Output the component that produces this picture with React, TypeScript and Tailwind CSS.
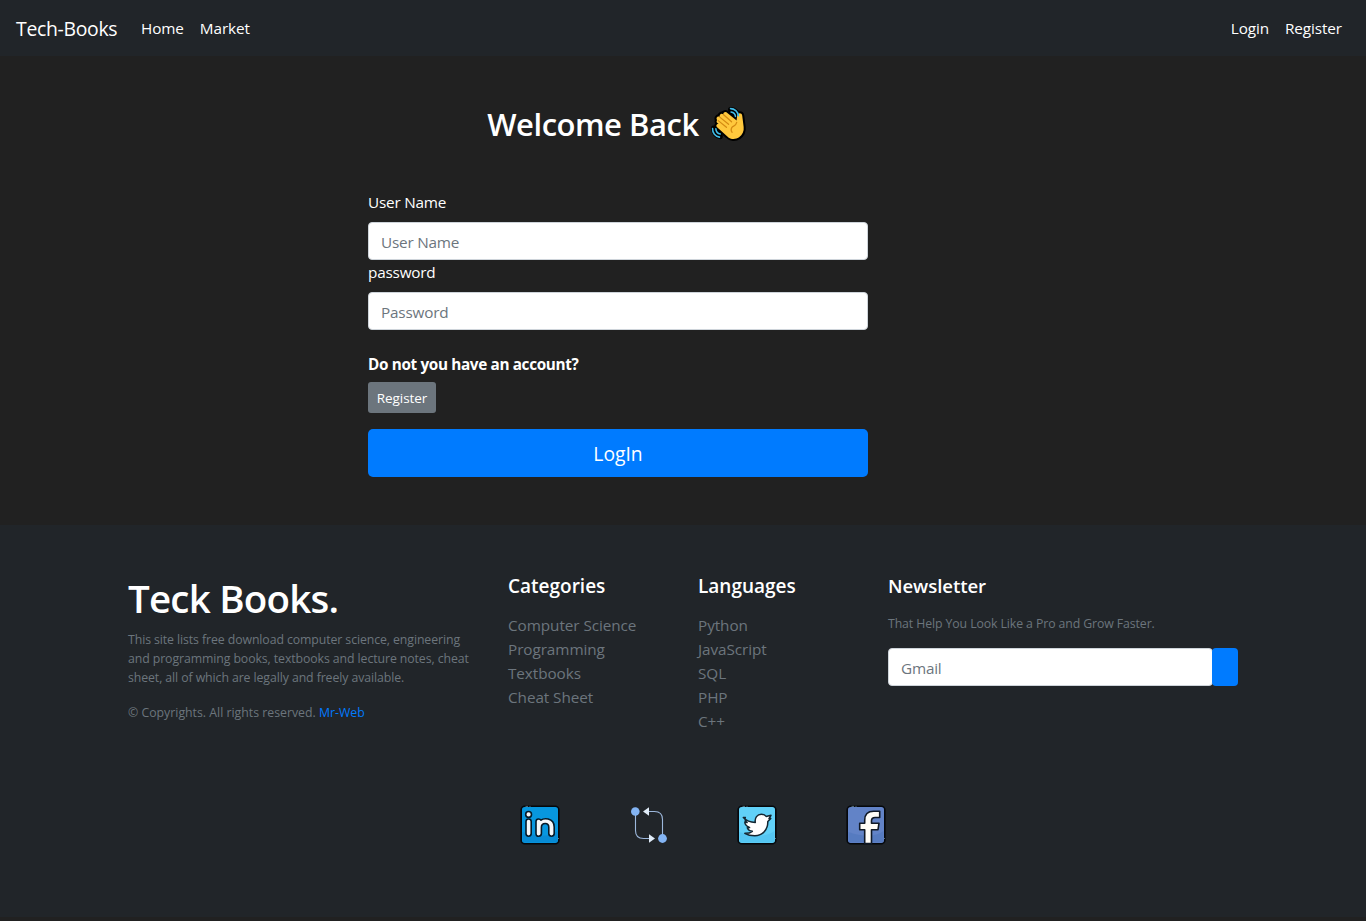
import type { ReactNode } from "react";

const categories = ["Computer Science", "Programming", "Textbooks", "Cheat Sheet"];
const languages = ["Python", "JavaScript", "SQL", "PHP", "C++"];

function WavingHand() {
  return (
    <svg className="h-10 w-10 shrink-0" viewBox="0.500 0 39 39" fill="none" strokeLinecap="round" strokeLinejoin="round">
      <g stroke="#000" strokeWidth="5">
        <path d="M21.5 5.500c4 0 6.700 2.500 7.200 6M23 9.200c1.500.2 2.700 1.200 3 2.600M5 23.500c-.2 4.500 2.500 7.700 6.500 8.300M7.700 24.700c.2 2 1.400 3.500 3 4" />
      </g>
      <path
        d="M8.400 15.500c-1.500-2 .7-4.200 2.600-2.900-.8-2.300 1.700-4.100 3.400-2.500.2-2.400 2.700-2.800 4-1.300l9 7.400.5-4.600c.5-3.200 4.500-3.400 5-.2l1.400 11.100c.5 4.200-1.200 7.700-4.500 10-3.700 2.500-8.300 2.200-11.400-.9L8.400 22.700c-1.700-1.700.1-4 2.100-2.800-2.500-1.700-3.300-2.700-2.100-4.400Z"
        fill="#ffc83d"
        stroke="#000"
        strokeWidth="4"
        className="[paint-order:stroke]"
      />
      <g stroke="#40bde9" strokeWidth="1.500">
        <path d="M21.500 4.500c4 0 7.200 3 7.700 7M22 7.800c2.500.3 4 2 4.300 4.300M4 23.800c-.3 4.500 2.700 7.900 6.700 8.500M7.200 24.200c.2 2.800 1.800 4.600 4.300 5" />
      </g>
      <path d="m11 12.800 8.600 7M14.500 10.300l8 7M9.500 16.200l8 6.500M27.500 18c-.8 4-3.600 3-4.800 5-1 1.700-.6 3.500.3 4.700" stroke="#d48a12" strokeWidth="1.200" />
    </svg>
  );
}

function BadgeFrame({ fill, edge, children }: { fill: string; edge: string; children: ReactNode }) {
  return (
    <svg className="h-10 w-10" viewBox="0 0 40 40">
      <rect x="1.200" y="1.200" width="37.600" height="37.600" rx="3.500" fill={fill} stroke="#05080b" strokeWidth="1.600" />
      <path d="M2.500 27v8.500q0 2 2 2h31q2 0 2-2V26q-12 9-35 1Z" fill={edge} opacity=".45" />
      <path d="M5.500 1.400h2.500M9.500 1.400h1M38.500 33v1" stroke="#b9e5f8" strokeWidth=".8" opacity=".6" />
      {children}
    </svg>
  );
}

function LinkedinIcon() {
  return (
    <BadgeFrame fill="#0797df" edge="#087cc8">
      <g fill="#f4f8fa" stroke="#061a28" strokeWidth="1.600" strokeLinejoin="round">
        <circle cx="8.600" cy="9.400" r="2.900" />
        <path d="M6 16.600q0-2.600 2.600-2.600t2.600 2.600v12q0 2.600-2.600 2.600T6 28.600Z" />
        <path d="M16 16.600q0-2.600 2.600-2.600 1.700 0 2.300 1.200c2-1.500 4.700-1.800 7.300-1.100 4.200 1.100 6 4 6 7.900v6.600q0 2.600-2.700 2.600t-2.700-2.600v-6.300c0-2.500-1.300-3.800-3.600-3.800s-3.800 1.500-3.800 3.800v6.300q0 2.600-2.700 2.600T16 28.600Z" />
      </g>
    </BadgeFrame>
  );
}

function CompareIcon() {
  return (
    <svg className="h-10 w-10" viewBox="0 0 40 40" fill="none">
      <path d="M6.500 7v18.500Q6.500 33.500 14.500 33.500H20M33.500 33V14.500Q33.500 6.500 25.500 6.500H20" stroke="#9db8dc" strokeWidth="1.100" />
      <path d="m14 6.500 6-4.300v8.600ZM26 33.500l-6-4.300v8.600Z" fill="#e0ebf7" />
      <circle cx="6.300" cy="6.500" r="4.300" fill="#83b4f3" />
      <circle cx="33.500" cy="33.500" r="4.400" fill="#83b4f3" />
    </svg>
  );
}

function TwitterIcon() {
  return (
    <BadgeFrame fill="#61d1f8" edge="#48b9eb">
      <path
        d="M6.300 12.500c3.200 3.400 7.300 4.800 12 5-.8-4.600 2-8.200 6-8.200 2.300 0 3.800.8 4.800 2.100l4.900-1.100-2 3.400 1.800-.2-3 3c.2 7.700-4.900 14.300-13 14.300-3.700 0-7.200-.8-10-2.500 3.200.2 5.500-.5 7.500-2-2.500-.4-4.300-1.500-5-3.600l2.300-.1c-2.700-1.200-4.700-3-4.800-5.600l2.300.6c-2-1.700-2.500-3.700-1.800-5.100Z"
        fill="#fff"
        stroke="#142631"
        strokeWidth="1.500"
        strokeLinejoin="round"
      />
    </BadgeFrame>
  );
}

function FacebookIcon() {
  return (
    <BadgeFrame fill="#6283c7" edge="#4a70b8">
      <path
        d="M18.700 38.600V24.700h-5v-6.500h5v-3c0-5.700 3.300-8.900 8.900-8.900h6.100v6.200h-4.600c-2.700 0-3.600 1-3.600 3.300v2.400h7.500l-1 6.500h-6.500v13.900Z"
        fill="#fffdf8"
        stroke="#101926"
        strokeWidth="1.600"
        strokeLinejoin="round"
      />
    </BadgeFrame>
  );
}

function LinkColumn({ title, links }: { title: string; links: string[] }) {
  return (
    <div className="w-[190px] px-[15px]">
      <h5 className="mb-[15px] pt-px text-[19px] leading-6 font-semibold">{title}</h5>
      <ul className="text-[15.300px] leading-6 tracking-[-0.07px] text-[#6c757d]">
        {links.map((link) => (
          <li key={link}>
            <a href="#">{link}</a>
          </li>
        ))}
      </ul>
    </div>
  );
}

const inputClass =
  "block h-[38px] w-full rounded border border-[#ced4da] bg-white px-3 pt-px text-[15.300px] tracking-[-0.2px] text-[#495057] outline-none placeholder:text-[#6c757d]";

export default function App() {
  return (
    <div className="flex h-[921px] flex-col overflow-hidden bg-[#212121] font-['Open_Sans','Noto_Sans',sans-serif] text-white">
      <nav className="flex h-14 shrink-0 items-center bg-[#212529] px-4 text-[15.300px] tracking-[-0.1px]">
        <a href="#" className="w-[117px] pt-0.5 text-[19.400px] tracking-[-0.3px]">Tech-Books</a>
        <div className="flex gap-4 pl-2">
          <a href="#">Home</a>
          <a href="#">Market</a>
        </div>
        <div className="ml-auto flex gap-4 pr-2">
          <a href="#">Login</a>
          <a href="#">Register</a>
        </div>
      </nav>

      <main className="flex h-[469px] shrink-0 flex-col pt-12 pl-[368px]">
        <div className="w-[500px]">
          <h1 className="flex h-10 items-center justify-center gap-2.5 text-[31px] leading-10 font-semibold tracking-[-0.48px]">
            <span>Welcome Back</span>
            <WavingHand />
          </h1>
          <form className="mt-[46px] text-[15.300px] tracking-[-0.2px]" onSubmit={(event) => event.preventDefault()}>
            <label className="mb-2 block leading-6" htmlFor="username">User Name</label>
            <input id="username" className={inputClass} placeholder="User Name" />
            <label className="mb-2 block leading-6" htmlFor="password">password</label>
            <input id="password" type="password" className={inputClass} placeholder="Password" />
            <p className="mt-[22px] text-[15.300px] leading-6 font-bold tracking-[-0.35px]">Do not you have an account?</p>
            <button type="button" className="mt-1.5 block h-[31px] w-[68px] rounded-[3px] bg-[#6c757d] pt-px text-[13.500px] tracking-[-0.05px]">
              Register
            </button>
            <button type="submit" className="mt-4 block h-12 w-full rounded-[5px] bg-[#007bff] pt-0.5 text-[19.300px] tracking-normal">
              LogIn
            </button>
          </form>
        </div>
      </main>

      <footer className="h-[392px] shrink-0 bg-[#212529] pt-12">
        <div className="mx-auto flex h-[232px] w-[1140px]">
          <div className="w-[380px] px-[15px]">
            <h2 className="mt-px mb-2 text-[38.500px] leading-12 font-semibold tracking-[-0.78px]">Teck Books.</h2>
            <p className="text-[12.300px] leading-[19px] tracking-[-0.09px] text-[#6c757d]">
              This site lists free download computer science, engineering
              <br />
              and programming books, textbooks and lecture notes, cheat
              <br />
              sheet, all of which are legally and freely available.
            </p>
            <p className="mt-4 text-[12.300px] leading-[19px] text-[#6c757d]">
              © Copyrights. All rights reserved.{" "}
              <a href="#" className="text-[#007bff]">Mr-Web</a>
            </p>
          </div>
          <LinkColumn title="Categories" links={categories} />
          <LinkColumn title="Languages" links={languages} />
          <div className="w-[380px] px-[15px]">
            <h5 className="mb-4 pt-px text-[18.600px] leading-6 font-semibold tracking-[-0.08px]">Newsletter</h5>
            <p className="mb-[15px] text-[12.300px] leading-[19px] tracking-[-0.1px] text-[#6c757d]">
              That Help You Look Like a Pro and Grow Faster.
            </p>
            <div className="flex">
              <input aria-label="Gmail" className={inputClass} placeholder="Gmail" />
              <button type="button" aria-label="Subscribe" className="-ml-px h-[38px] w-[26px] shrink-0 rounded bg-[#007bff]" />
            </div>
          </div>
        </div>
        <div className="ml-[520px] flex w-[366px] justify-between">
          <a href="#" aria-label="LinkedIn"><LinkedinIcon /></a>
          <a href="#" aria-label="GitHub"><CompareIcon /></a>
          <a href="#" aria-label="Twitter"><TwitterIcon /></a>
          <a href="#" aria-label="Facebook"><FacebookIcon /></a>
        </div>
      </footer>
    </div>
  );
}
